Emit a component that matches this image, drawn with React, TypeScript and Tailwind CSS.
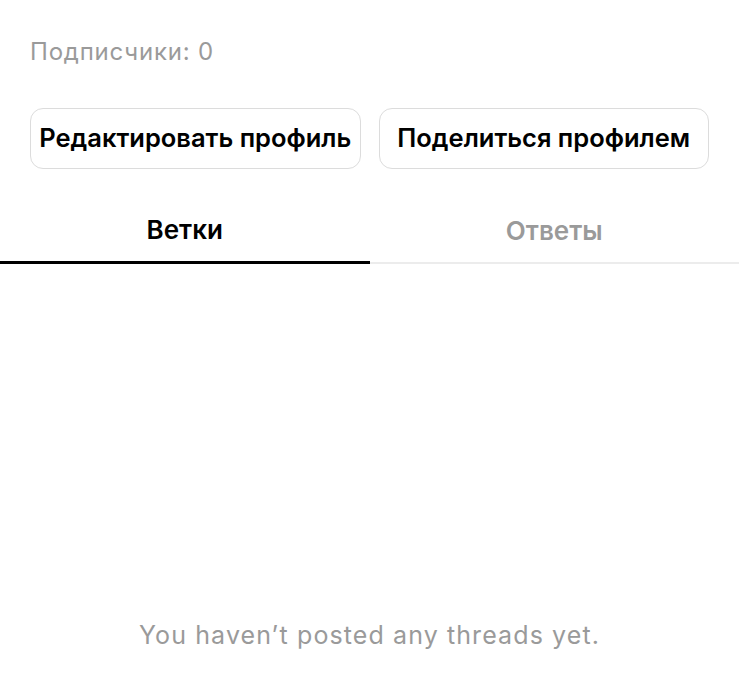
import React, { useState } from "react";

const tabs = ["Ветки", "Ответы"];

export default function App() {
  const [active, setActive] = useState(0);

  return (
    <div
      className="min-h-[675px] w-full bg-white flex flex-col"
      style={{ fontFamily: "Inter, 'Noto Sans', sans-serif" }}
    >
      <div className="px-[30px] pt-[36px]">
        <p className="text-[24px] leading-[32px] tracking-[0.8px] text-[#9a9a9a]">
          Подписчики: 0
        </p>

        <div className="mt-[40px] flex gap-[18px]">
          <button className="flex-1 h-[61px] rounded-[13px] border border-[#dcdcdc] text-[25.5px] font-semibold text-black">
            Редактировать профиль
          </button>
          <button className="flex-1 h-[61px] rounded-[13px] border border-[#dcdcdc] text-[25.5px] font-semibold text-black">
            Поделиться профилем
          </button>
        </div>
      </div>

      {/* tabs */}
      <div className="mt-[18px] flex">
        {tabs.map((t, i) => (
          <button
            key={t}
            onClick={() => setActive(i)}
            className={
              i === active
                ? "flex-1 h-[77px] pt-[10px] text-[26px] font-semibold text-black border-b-[3px] border-black"
                : "flex-1 h-[77px] pt-[11px] text-[26px] font-semibold text-[#9a9a9a] border-b-[2px] border-[#ececec]"
            }
          >
            {t}
          </button>
        ))}
      </div>

      <div className="flex justify-center pt-[355px]">
        <p className="text-[25px] leading-[32px] tracking-[1.1px] text-[#9a9a9a]">
          You haven’t posted any threads yet.
        </p>
      </div>
    </div>
  );
}
